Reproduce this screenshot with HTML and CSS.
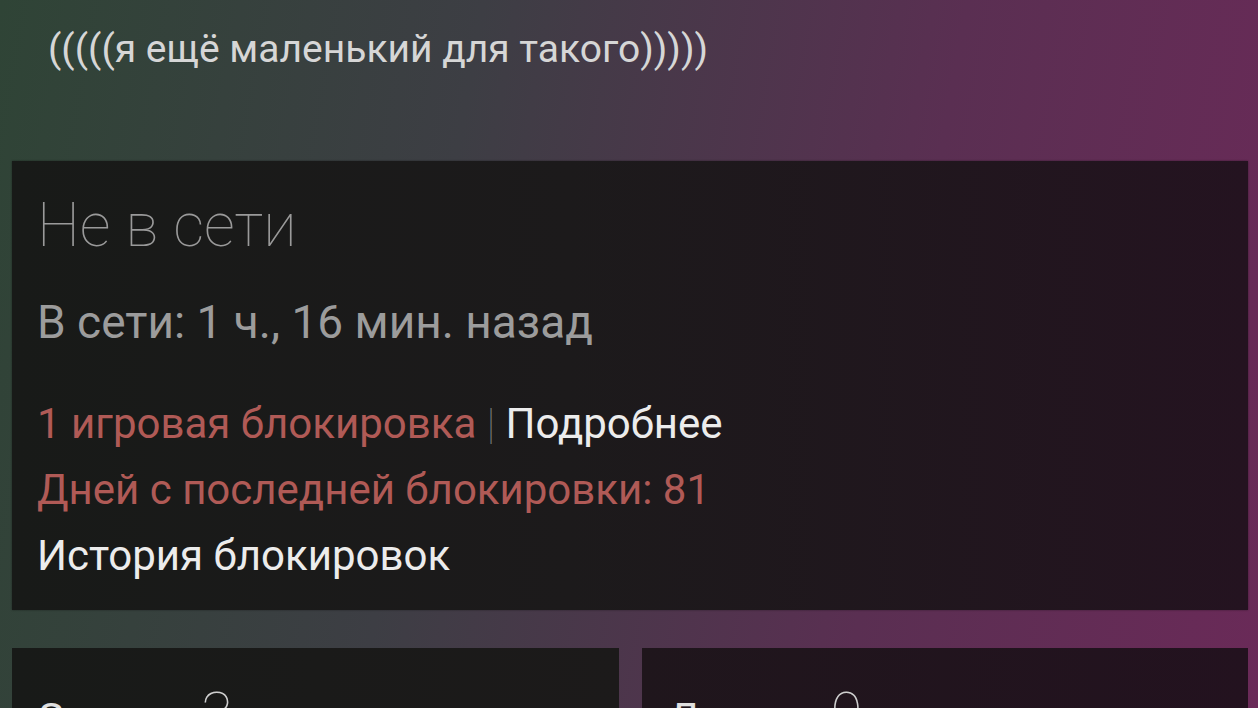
FILE: index.html
```html
<!DOCTYPE html>
<html lang="ru">
<head>
    <meta charset="UTF-8">
    <meta name="viewport" content="width=device-width, initial-scale=1.0">
    <title>Профиль</title>
    <link rel="stylesheet" href="styles.css">
</head>
<body>
    <div class="page">
        <p class="summary">(((((я ещё маленький для такого)))))</p>

        <div class="status-card">
            <h2 class="status">Не в сети</h2>
            <p class="last-online">В сети: 1 ч., 16 мин. назад</p>

            <div class="bans">
                <p class="ban-line">
                    <span class="red">1 игровая блокировка</span>
                    <span class="sep">|</span>
                    <a href="#" class="link">Подробнее</a>
                </p>
                <p class="ban-line red">Дней с последней блокировки: 81</p>
                <p class="ban-line"><a href="#" class="link">История блокировок</a></p>
            </div>
        </div>

        <div class="counters">
            <div class="counter-card">
                <span class="counter-label">Значки</span>
                <span class="counter-value">3</span>
            </div>
            <div class="counter-card">
                <span class="counter-label">Друзья</span>
                <span class="counter-value">0</span>
            </div>
        </div>
    </div>
</body>
</html>
```

FILE: styles.css
```css
body {
    font-family: Roboto, "Liberation Sans", sans-serif;
    margin: 0;
    padding: 0;
    height: 708px;
    overflow: hidden;
    background: linear-gradient(100deg, #2f4436 0%, #3d3e44 35%, #5a2f52 70%, #6a2a58 100%);
}

p {
    margin: 0;
}

.page {
    padding: 0 10px 0 12px;
}

.summary {
    color: #d6d6d6;
    font-size: 39px;
    line-height: 46px;
    padding: 26px 0 0 36px;
    height: 161px;
    box-sizing: border-box;
}

.status-card {
    background: linear-gradient(90deg, #181a18 0%, #1c1a1b 45%, #241320 100%);
    height: 449px;
    box-sizing: border-box;
    padding: 29px 25px 0 25px;
    box-shadow: 0 0 2px rgba(0, 0, 0, 0.4);
}

.status {
    margin: 0;
    font-size: 61px;
    font-weight: 100;
    color: #9a9a9a;
    line-height: 70px;
}

.last-online {
    font-size: 46px;
    color: #9c9c9c;
    margin-top: 34px;
    line-height: 56px;
}

.bans {
    margin-top: 41px;
}

.ban-line {
    font-size: 42px;
    line-height: 66px;
    color: #e6e6e6;
}

.red {
    color: #b05a56;
}

.sep {
    color: #777;
    font-weight: 100;
}

.link {
    color: #ececec;
    text-decoration: none;
}

.counters {
    display: flex;
    gap: 23px;
    margin-top: 38px;
}

.counter-card {
    flex: 1;
    height: 120px;
    padding: 36px 0 0 27px;
    box-sizing: border-box;
    display: flex;
    align-items: baseline;
    gap: 20px;
}

.counter-card:first-child {
    background: linear-gradient(90deg, #181a18, #1c1a1a);
}

.counter-card:last-child {
    background: linear-gradient(90deg, #1f161c, #23121f);
}

.counter-label {
    font-size: 42px;
    line-height: 1;
    color: #e0e0e0;
}

.counter-value {
    font-size: 58px;
    line-height: 1;
    font-weight: 100;
    color: #cfcfcf;
}
```
